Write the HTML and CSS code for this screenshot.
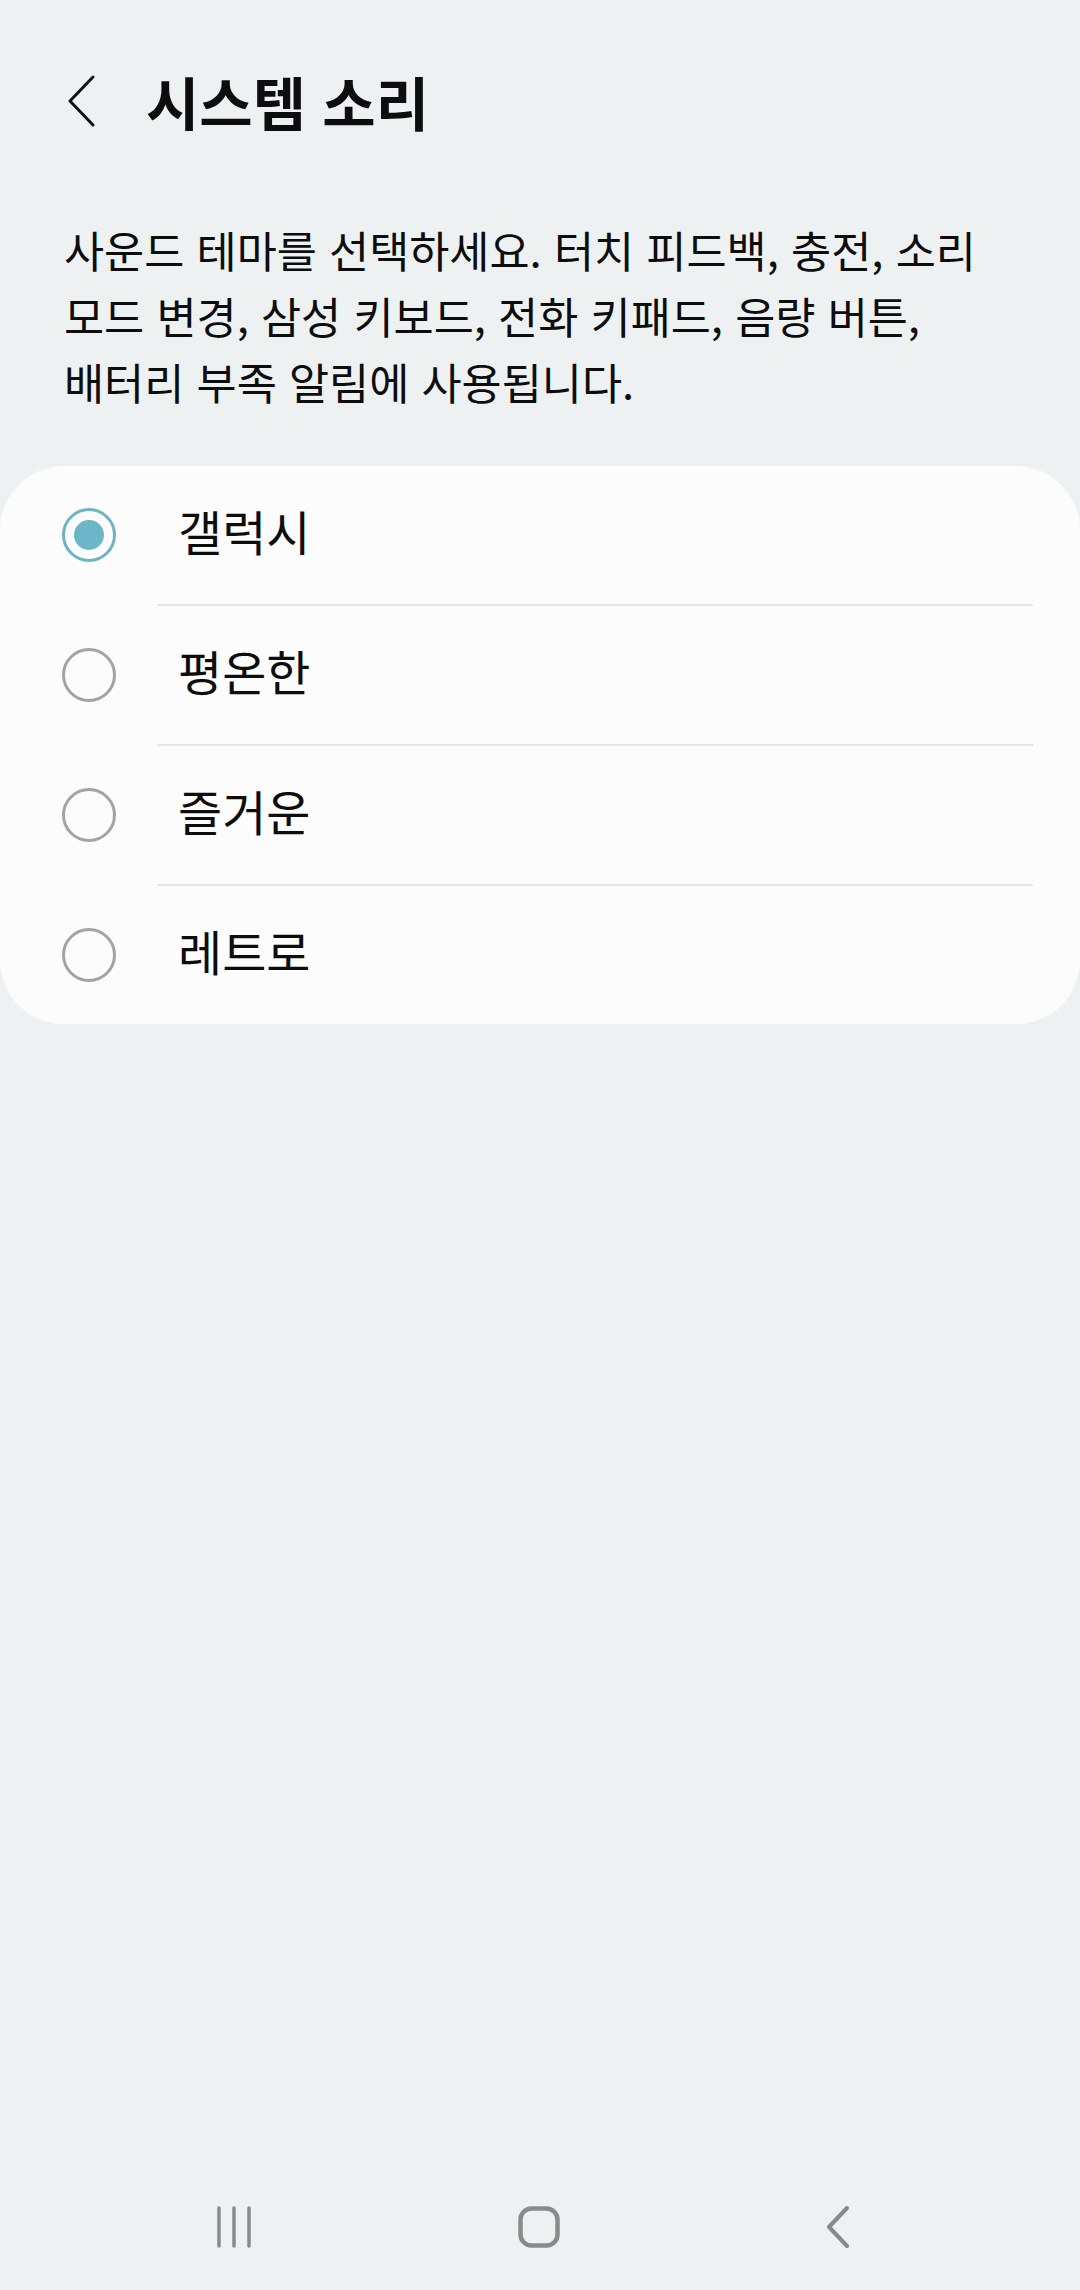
FILE: index.html
```html
<!DOCTYPE html>
<html lang="ko">
<head>
    <meta charset="UTF-8">
    <meta name="viewport" content="width=device-width, initial-scale=1.0">
    <title>시스템 소리</title>
    <link rel="stylesheet" href="styles.css">
</head>
<body>
    <div class="screen">
        <div class="header">
            <button class="back" aria-label="뒤로">
                <svg width="28" height="52" viewBox="0 0 28 52">
                    <path d="M25 2 L2 26 L25 50" fill="none" stroke="#111" stroke-width="3" stroke-linecap="round" stroke-linejoin="round"/>
                </svg>
            </button>
            <h1 class="title">시스템 소리</h1>
        </div>

        <p class="desc">사운드 테마를 선택하세요. 터치 피드백, 충전, 소리 모드 변경, 삼성 키보드, 전화 키패드, 음량 버튼, 배터리 부족 알림에 사용됩니다.</p>

        <div class="card">
            <div class="row">
                <span class="radio checked"></span>
                <span class="label">갤럭시</span>
            </div>
            <div class="divider"></div>
            <div class="row">
                <span class="radio"></span>
                <span class="label">평온한</span>
            </div>
            <div class="divider"></div>
            <div class="row">
                <span class="radio"></span>
                <span class="label">즐거운</span>
            </div>
            <div class="divider"></div>
            <div class="row">
                <span class="radio"></span>
                <span class="label">레트로</span>
            </div>
        </div>

        <div class="navbar">
            <svg class="nav-recent" width="34" height="42" viewBox="0 0 34 42">
                <path d="M2 2 V40 M17 2 V40 M32 2 V40" stroke="#8a8a8a" stroke-width="3.5" stroke-linecap="round"/>
            </svg>
            <svg class="nav-home" width="42" height="42" viewBox="0 0 42 42">
                <rect x="2.5" y="2.5" width="37" height="37" rx="11" fill="none" stroke="#8a8a8a" stroke-width="4.5"/>
            </svg>
            <svg class="nav-back" width="24" height="42" viewBox="0 0 24 42">
                <path d="M21 2 L3 21 L21 40" fill="none" stroke="#8a8a8a" stroke-width="4" stroke-linecap="round" stroke-linejoin="round"/>
            </svg>
        </div>
    </div>
</body>
</html>
```

FILE: styles.css
```css
/* page */
body {
    margin: 0;
    background: #eef1f2;
    font-family: "Noto Sans CJK KR", "Noto Sans", sans-serif;
    color: #0d0d0d;
}

.screen {
    display: flex;
    flex-direction: column;
    height: 2290px;
}

/* top bar */
.header {
    display: flex;
    align-items: center;
    height: 140px;
    margin-top: 31px;
    padding-left: 68px;
}

.back {
    display: flex;
    padding: 0;
    border: none;
    background: none;
}

.title {
    margin: 0 0 0 50px;
    font-size: 58px;
    font-weight: 700;
    line-height: 1;
}

/* explanation */
.desc {
    margin: 45px 64px 0 64px;
    font-size: 43.6px;
    line-height: 66px;
    word-break: keep-all;
}

/* list of themes */
.card {
    margin-top: 52px;
    background: #fcfcfc;
    border-radius: 64px;
}

.row {
    display: flex;
    align-items: center;
    height: 138px;
    padding-left: 62px;
}

.radio {
    width: 54px;
    height: 54px;
    box-sizing: border-box;
    border: 3px solid #a3a3a3;
    border-radius: 50%;
    display: flex;
    align-items: center;
    justify-content: center;
}

.radio.checked {
    border-color: #6db3c3;
}

.radio.checked::after {
    content: "";
    width: 30px;
    height: 30px;
    border-radius: 50%;
    background: #6cb6c8;
}

.label {
    margin: 0 0 10px 62px;
    font-size: 48px;
}

.divider {
    height: 2px;
    margin: 0 47px 0 157px;
    background: #e6e6e6;
}

/* system navigation */
.navbar {
    margin-top: auto;
    height: 126px;
    display: flex;
    align-items: center;
    justify-content: space-between;
    padding: 0 230px 0 217px;
}
```
